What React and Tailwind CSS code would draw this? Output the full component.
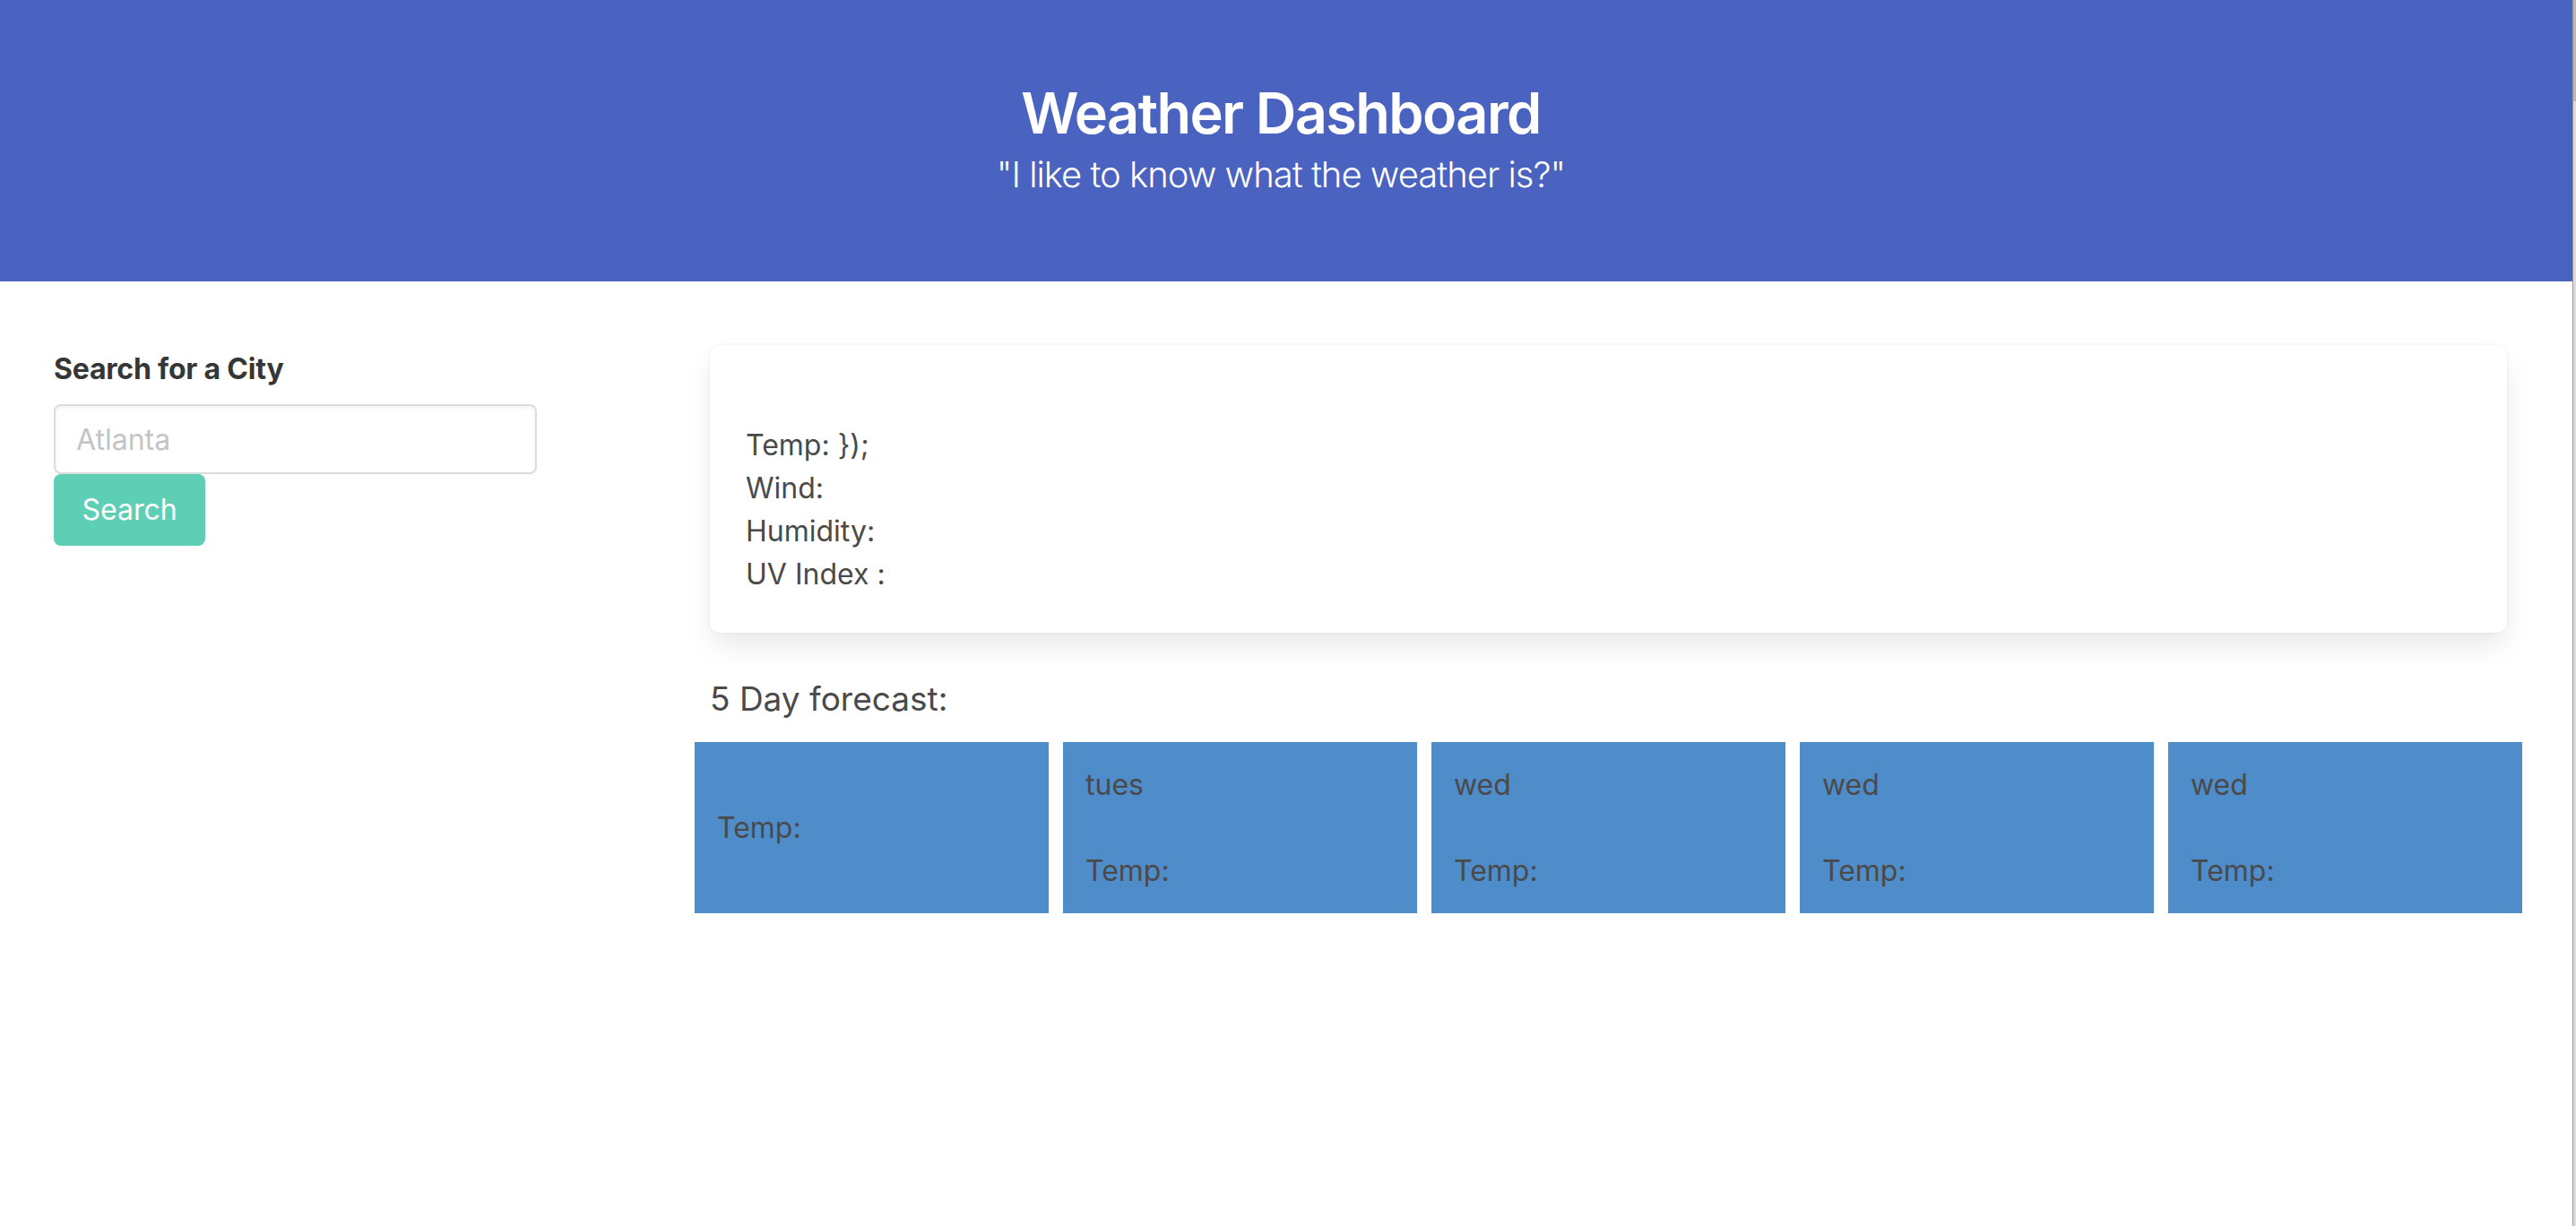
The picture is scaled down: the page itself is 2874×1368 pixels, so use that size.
const forecast = [
  { day: "", temp: "" },
  { day: "tues", temp: "" },
  { day: "wed", temp: "" },
  { day: "wed", temp: "" },
  { day: "wed", temp: "" },
];

function Hero() {
  return (
    <section className="h-[314px] bg-[#4a62c0] text-white flex flex-col items-center pt-[90px] pr-[12px]">
      <h1 className="text-[63px] leading-[72px] font-semibold tracking-[-1.6px]">Weather Dashboard</h1>
      <p className="mt-[8px] text-[40px] leading-[50px] font-light tracking-[-1px]">"I like to know what the weather is?"</p>
    </section>
  );
}

function SearchPanel() {
  return (
    <div className="w-[792px] shrink-0 pl-[60px] pt-[3px]">
      <label className="block text-[32px] leading-[48px] font-bold text-[#363636] tracking-[-0.2px]">Search for a City</label>
      <input
        type="text"
        placeholder="Atlanta"
        className="mt-[15px] block w-[539px] h-[78px] rounded-[8px] border-2 border-[#dbdbdb] px-[23px] text-[32px] text-[#363636] placeholder:text-[#c4c4c4] shadow-[inset_0_2px_4px_rgba(10,10,10,0.05)] outline-none"
      />
      <button className="block w-[169px] h-[80px] rounded-[8px] bg-[#5ecfb4] text-white text-[32px]">Search</button>
    </div>
  );
}

function CurrentCard() {
  return (
    <div className="rounded-[12px] bg-white shadow-[0_16px_32px_-4px_rgba(10,10,10,0.1),0_0_0_2px_rgba(10,10,10,0.02)] pl-[40px] pt-[42px] pb-[41px] text-[32px] leading-[48px] text-[#4a4a4a]">
      <div className="h-[46px]"></div>
      <p>Temp: {"});"}</p>
      <p>Wind:</p>
      <p>Humidity:</p>
      <p>UV Index :</p>
    </div>
  );
}

function Forecast() {
  return (
    <div>
      <h3 className="mt-[47px] text-[37px] leading-[54px] text-[#4a4a4a]">5 Day forecast:</h3>
      <div className="mt-[21px] -mx-[17px] flex gap-[16px]">
        {forecast.map((f, i) => (
          <div
            key={i}
            className="w-[395px] h-[191px] bg-[#4f8cca] flex flex-col justify-center px-[25px] text-[32px] leading-[48px] text-[#4a4a4a]"
          >
            {f.day && <p>{f.day}</p>}
            {f.day && <div className="h-[48px]"></div>}
            <p>Temp:</p>
          </div>
        ))}
      </div>
    </div>
  );
}

export default function App() {
  return (
    <div className="flex min-h-screen bg-white font-['Inter',sans-serif]">
      <div className="flex-1">
        <Hero />
        <div className="flex pt-[71px]">
          <SearchPanel />
          <div className="flex-1 pr-[73px]">
            <CurrentCard />
            <Forecast />
          </div>
        </div>
      </div>
      <div className="w-[6px] shrink-0 border-l border-[#9a9a9a] bg-[#dcdcdc] flex flex-col">
        <div className="h-[113px] bg-[#b8b8b8]"></div>
      </div>
    </div>
  );
}
